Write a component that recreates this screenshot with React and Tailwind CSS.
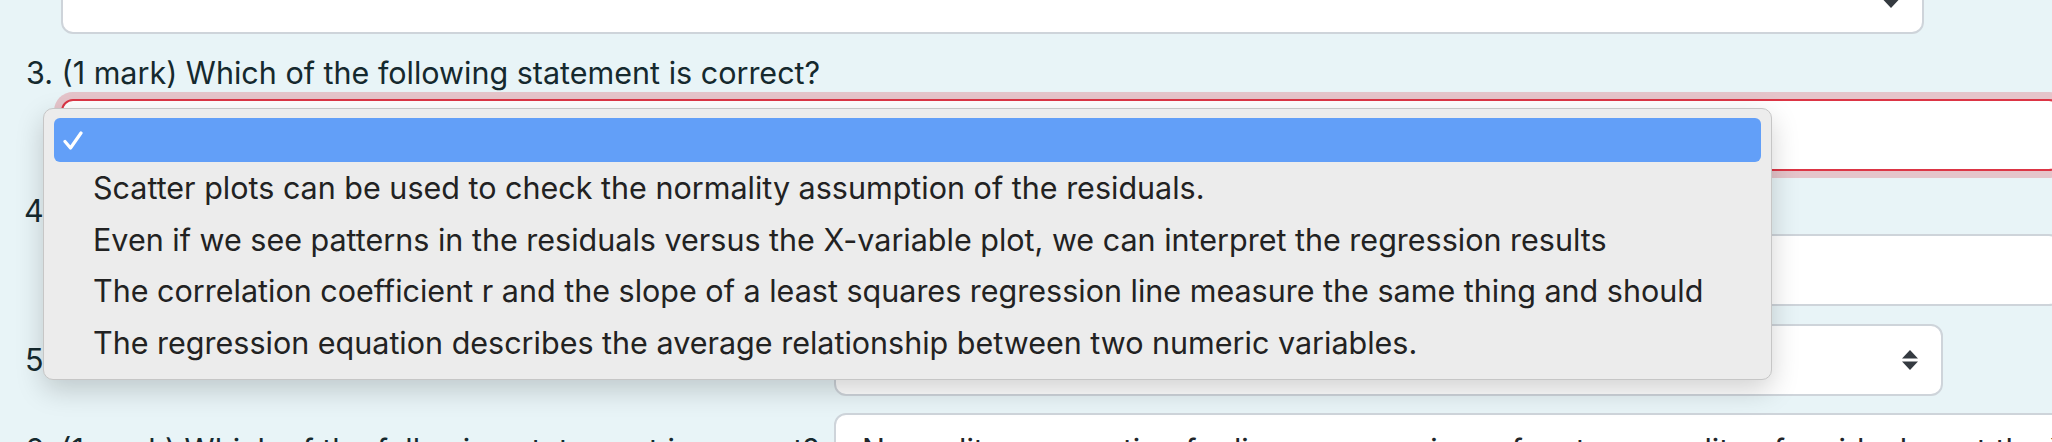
import React from "react";

function Arrows() {
  return (
    <svg width="16" height="20" viewBox="0 0 16 20" className="shrink-0">
      <path d="M0 8.5 L8 0 L16 8.5 Z" fill="#343a40" />
      <path d="M0 11.5 L8 20 L16 11.5 Z" fill="#343a40" />
    </svg>
  );
}

function Check() {
  return (
    <svg width="20" height="19" viewBox="0 0 20 19" className="shrink-0">
      <path d="M2 10.5 L7.5 17 L18 2" fill="none" stroke="#ffffff" strokeWidth="3.2" strokeLinecap="round" strokeLinejoin="round" />
    </svg>
  );
}

const options = [
  "Scatter plots can be used to check the normality assumption of the residuals.",
  "Even if we see patterns in the residuals versus the X-variable plot, we can interpret the regression results",
  "The correlation coefficient r and the slope of a least squares regression line measure the same thing and should",
  "The regression equation describes the average relationship between two numeric variables.",
];

export default function App() {
  return (
    <div className="relative w-[2052px] h-[442px] overflow-hidden bg-[#e8f4f7] font-['Inter','Noto_Sans',sans-serif] text-[30.5px] text-[#15292e]">
      {/* Q2 select (cut off at top) */}
      <div className="pl-[61px]">
        <div className="-mt-[38px] h-[72px] w-[1863px] bg-white border-2 border-[#ced4da] rounded-[12px] flex items-center justify-end pr-[23px]">
          <Arrows />
        </div>
      </div>

      {/* Q3 */}
      <div className="pl-[26px] mt-[15px] leading-[48px] whitespace-nowrap">
        3. (1 mark) Which of the following statement is correct?
      </div>
      <div className="pl-[61px] mt-[2px]">
        <div className="h-[72px] w-[2000px] bg-white border-2 border-[#dc3545] rounded-[12px] shadow-[0_0_0_7px_rgba(220,53,69,0.25)]" />
      </div>

      {/* Q4 */}
      <div className="pl-[24px] mt-[16px] leading-[48px] whitespace-nowrap">
        4. (1 mark) Which of the following statement is correct?
      </div>
      <div className="pl-[61px] -mt-[1px]">
        <div className="h-[72px] w-[2000px] bg-white border-2 border-[#ced4da] rounded-[12px]" />
      </div>

      {/* Q5 */}
      <div className="mt-[18px] flex items-center">
        <div className="w-[834px] shrink-0 pl-[25px] leading-[48px] whitespace-nowrap">
          5. (1 mark) Which of the following statement is correct?
        </div>
        <div className="h-[72px] w-[1109px] shrink-0 bg-white border-2 border-[#ced4da] rounded-[12px] flex items-center justify-end pr-[23px]">
          <Arrows />
        </div>
      </div>

      {/* Q6 */}
      <div className="mt-[17px] flex items-start">
        <div className="w-[834px] shrink-0 pl-[25px] mt-[13px] leading-[48px] whitespace-nowrap">
          6. (1 mark) Which of the following statement is correct?
        </div>
        <div className="h-[72px] w-[1400px] shrink-0 bg-white border-2 border-[#ced4da] rounded-[12px] pl-[26px] pt-[11px] leading-[48px] whitespace-nowrap text-[#212529]">
          Normality assumption for linear regression refers to normality of residuals, not the X or Y variables.
        </div>
      </div>

      {/* Native dropdown popup */}
      <div className="absolute left-[43px] top-[108px] w-[1729px] h-[272px] rounded-[10px] bg-[#ececec] border border-[#c6c6c6] shadow-[0_10px_28px_rgba(0,0,0,0.18)] pt-[9px] px-[10px] text-[#222222]">
        <div className="h-[44px] rounded-[6px] bg-[#629ff8] flex items-center pl-[9px]">
          <Check />
        </div>
        {options.map((o) => (
          <div key={o} className="pl-[39px] leading-[51.5px] whitespace-nowrap">
            {o}
          </div>
        ))}
      </div>
    </div>
  );
}
